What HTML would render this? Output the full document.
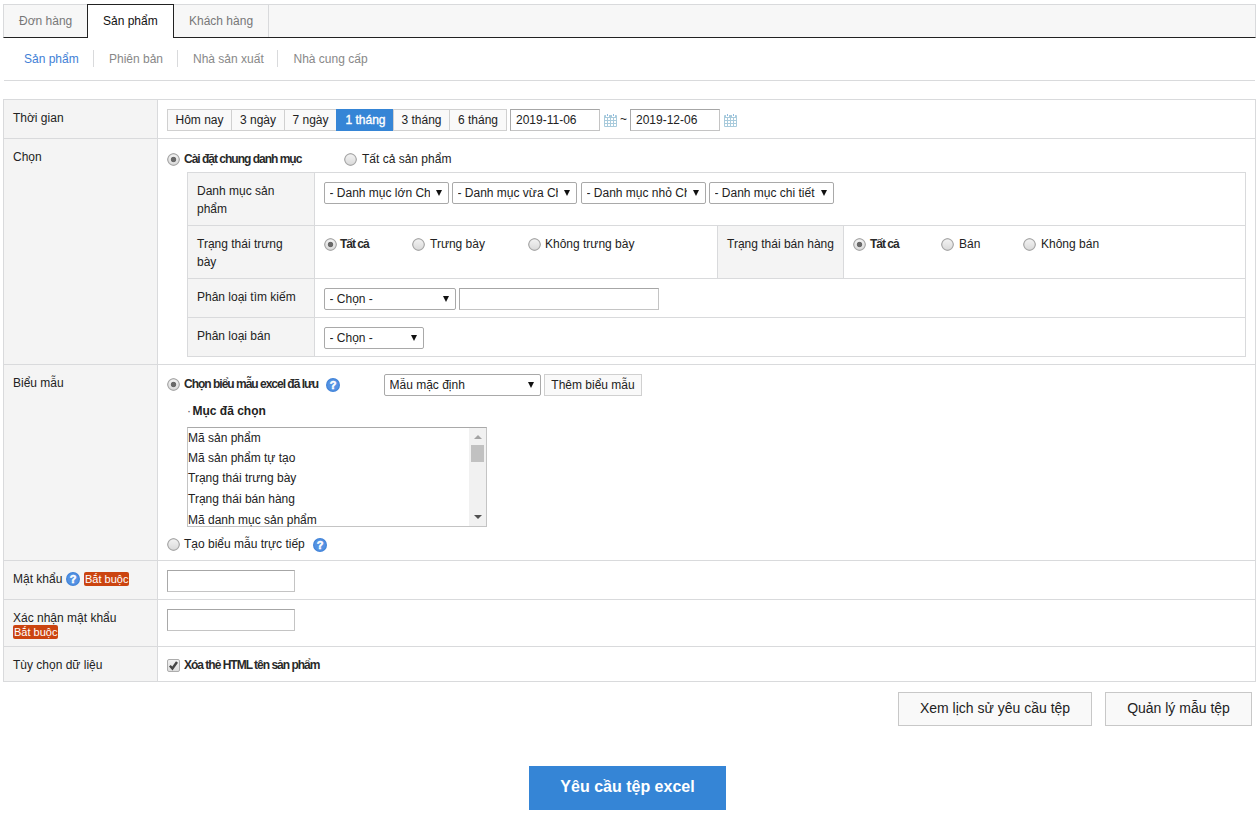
<!DOCTYPE html>
<html lang="vi">
<head>
<meta charset="utf-8">
<title>Xuất excel sản phẩm</title>
<style>
*{box-sizing:border-box;margin:0;padding:0}
html,body{width:1260px;height:819px;background:#fff;overflow:hidden}
body{position:relative;font-family:"Liberation Sans",sans-serif;font-size:12px;color:#222;line-height:14px}
.a{position:absolute}
.t{position:absolute;white-space:nowrap;line-height:14px;height:14px}
.b{font-weight:bold;letter-spacing:-1px;color:#2a2a2a}
.box{position:absolute;border:1px solid #d9dadc}
.bg{position:absolute;background:#f4f4f4}
.hl{position:absolute;height:1px;background:#d9dadc}
.vl{position:absolute;width:1px;background:#d9dadc}
.inp{position:absolute;background:#fff;border:1px solid #c4c4c4;border-top-color:#a6a6a6;border-left-color:#a9a9a9}
.sel{position:absolute;background:#fff;border:1px solid #a9a9a9;border-radius:2px;height:22px;overflow:hidden}
.sel span{position:absolute;left:4.5px;top:3px;white-space:nowrap;line-height:14px;overflow:hidden}
.sel i{position:absolute;right:6px;top:7px;width:0;height:0;border-left:3.5px solid transparent;border-right:3.5px solid transparent;border-top:6px solid #111}
.rad{position:absolute;width:13px;height:13px;border-radius:50%;background:radial-gradient(circle at 50% 50%,rgba(172,172,172,0) 0,rgba(172,172,172,0) 4.7px,#acacac 5.5px,#acacac 6.1px,#fff 6.8px),linear-gradient(#f3f3f3 1px,#dcdcdc 11px)}
.rad.on:after{content:"";position:absolute;left:0;top:0;width:13px;height:13px;border-radius:50%;background:radial-gradient(circle at 50% 50%,#696969 0,#696969 2.3px,rgba(105,105,105,0) 3.1px)}
.help{position:absolute;width:14px;height:14px;border-radius:50%;background:radial-gradient(circle at 50% 50%,#5794e3 0,#5492e2 5px,#3f82d8 6.6px);color:#fff;font-weight:bold;font-size:11px;line-height:14px;text-align:center;-webkit-text-stroke:0.5px #fff}
.badge{position:absolute;height:14px;width:45px;background:#cb4410;color:#fff;font-size:11px;line-height:15px;border-radius:2px;padding:0 0 0 1px;white-space:nowrap;overflow:hidden}
.pbtn{position:absolute;top:109px;height:22px;border:1px solid #d0d0d0;background:#f9f9f9;text-align:center;line-height:20px;white-space:nowrap}
.pbtn.on{background:#3585d6;border-color:#3585d6;color:#fff;padding-left:2px;-webkit-text-stroke:0.35px #fff}
.btn{position:absolute;top:692px;height:34px;border:1px solid #c8c8c8;background:#f9f9f9;font-size:14px;line-height:30px;text-align:center;color:#222}
</style>
</head>
<body>

<!-- main tabs -->
<div class="a" style="left:3px;top:4px;width:1253px;height:34px;background:#f7f7f7;border:1px solid #d9dadc;border-bottom:1px solid #222"></div>
<div class="vl" style="left:268px;top:5px;height:32px"></div>
<div class="a" style="left:87px;top:4px;width:87px;height:34px;background:#fff;border:1px solid #222;border-bottom:none"></div>
<span class="t" style="left:19px;top:14px;color:#777">Đơn hàng</span>
<span class="t" style="left:103px;top:14px;color:#111">Sản phẩm</span>
<span class="t" style="left:189px;top:14px;color:#777">Khách hàng</span>

<!-- sub nav -->
<span class="t" style="left:24px;top:52px;color:#3f7fd6">Sản phẩm</span>
<div class="vl" style="left:93px;top:50px;height:17px"></div>
<span class="t" style="left:109px;top:52px;color:#888">Phiên bản</span>
<div class="vl" style="left:177px;top:50px;height:17px"></div>
<span class="t" style="left:193px;top:52px;color:#888">Nhà sản xuất</span>
<div class="vl" style="left:277px;top:50px;height:17px"></div>
<span class="t" style="left:293.5px;top:52px;color:#888">Nhà cung cấp</span>
<div class="hl" style="left:4px;top:80px;width:1251px"></div>

<!-- form table frame -->
<div class="bg" style="left:3px;top:99px;width:155px;height:583px"></div>
<div class="box" style="left:3px;top:99px;width:1253px;height:583px"></div>
<div class="vl" style="left:157px;top:99px;height:583px"></div>
<div class="hl" style="left:3px;top:138px;width:1253px"></div>
<div class="hl" style="left:3px;top:364px;width:1253px"></div>
<div class="hl" style="left:3px;top:560px;width:1253px"></div>
<div class="hl" style="left:3px;top:599px;width:1253px"></div>
<div class="hl" style="left:3px;top:646px;width:1253px"></div>

<!-- left labels -->
<span class="t" style="left:13px;top:111px">Thời gian</span>
<span class="t" style="left:13px;top:150px">Chọn</span>
<span class="t" style="left:13px;top:376px">Biểu mẫu</span>
<span class="t" style="left:13px;top:572px">Mật khẩu</span>
<span class="help" style="left:66px;top:572px">?</span>
<span class="badge" style="left:84px;top:572px">Bắt buộc</span>
<span class="t" style="left:13px;top:611px">Xác nhận mật khẩu</span>
<span class="badge" style="left:13px;top:625px">Bắt buộc</span>
<span class="t" style="left:13px;top:658px">Tùy chọn dữ liệu</span>

<!-- row 1: period -->
<div class="pbtn" style="left:167px;width:65px">Hôm nay</div>
<div class="pbtn" style="left:231px;width:54px">3 ngày</div>
<div class="pbtn" style="left:284px;width:53px">7 ngày</div>
<div class="pbtn on" style="left:336px;width:57px">1 tháng</div>
<div class="pbtn" style="left:393px;width:57px">3 tháng</div>
<div class="pbtn" style="left:449px;width:58px">6 tháng</div>
<div class="inp" style="left:510px;top:109px;width:90px;height:22px"></div>
<span class="t" style="left:516px;top:113px">2019-11-06</span>
<span class="t" style="left:620px;top:112px">~</span>
<div class="inp" style="left:630px;top:109px;width:90px;height:22px"></div>
<span class="t" style="left:636px;top:113px">2019-12-06</span>

<!-- calendar icons -->
<svg class="a" style="left:604px;top:114px" width="13" height="13" viewBox="0 0 13 13"><g fill="#a9cbdc"><rect x="0" y="1" width="13" height="12" rx="1"/><rect x="3" y="0" width="1" height="2"/><rect x="9" y="0" width="1" height="2"/></g><g fill="#fff"><rect x="2" y="1" width="3" height="2"/><rect x="8" y="1" width="3" height="2"/><rect x="1" y="4" width="2" height="2"/><rect x="4" y="4" width="2" height="2"/><rect x="7" y="4" width="2" height="2"/><rect x="10" y="4" width="2" height="2"/><rect x="1" y="7" width="2" height="2"/><rect x="4" y="7" width="2" height="2"/><rect x="7" y="7" width="2" height="2"/><rect x="10" y="7" width="2" height="2"/><rect x="1" y="10" width="2" height="2"/><rect x="4" y="10" width="2" height="2"/><rect x="7" y="10" width="2" height="2"/><rect x="10" y="10" width="2" height="2"/></g><g fill="#8fbbe0"><rect x="3" y="0" width="1" height="2"/><rect x="9" y="0" width="1" height="2"/></g></svg>
<svg class="a" style="left:724px;top:114px" width="13" height="13" viewBox="0 0 13 13"><g fill="#a9cbdc"><rect x="0" y="1" width="13" height="12" rx="1"/></g><g fill="#fff"><rect x="2" y="1" width="3" height="2"/><rect x="8" y="1" width="3" height="2"/><rect x="1" y="4" width="2" height="2"/><rect x="4" y="4" width="2" height="2"/><rect x="7" y="4" width="2" height="2"/><rect x="10" y="4" width="2" height="2"/><rect x="1" y="7" width="2" height="2"/><rect x="4" y="7" width="2" height="2"/><rect x="7" y="7" width="2" height="2"/><rect x="10" y="7" width="2" height="2"/><rect x="1" y="10" width="2" height="2"/><rect x="4" y="10" width="2" height="2"/><rect x="7" y="10" width="2" height="2"/><rect x="10" y="10" width="2" height="2"/></g><g fill="#8fbbe0"><rect x="3" y="0" width="1" height="2"/><rect x="9" y="0" width="1" height="2"/></g></svg>

<!-- row 2: Chọn -->
<span class="rad on" style="left:167px;top:153px"></span>
<span class="t b" style="left:184px;top:152px">Cài đặt chung danh mục</span>
<span class="rad" style="left:344px;top:153px"></span>
<span class="t" style="left:362px;top:152px">Tất cả sản phẩm</span>

<div class="bg" style="left:187px;top:172px;width:128px;height:185px"></div>
<div class="bg" style="left:717px;top:225px;width:127px;height:54px"></div>
<div class="box" style="left:187px;top:172px;width:1059px;height:185px"></div>
<div class="vl" style="left:314px;top:172px;height:185px"></div>
<div class="hl" style="left:187px;top:225px;width:1059px"></div>
<div class="hl" style="left:187px;top:278px;width:1059px"></div>
<div class="hl" style="left:187px;top:317px;width:1059px"></div>
<div class="vl" style="left:717px;top:225px;height:54px"></div>
<div class="vl" style="left:843px;top:225px;height:54px"></div>

<span class="t" style="left:197px;top:184px">Danh mục sản</span>
<span class="t" style="left:197px;top:202px">phẩm</span>
<span class="t" style="left:197px;top:237px">Trạng thái trưng</span>
<span class="t" style="left:197px;top:255px">bày</span>
<span class="t" style="left:197px;top:290px">Phân loại tìm kiếm</span>
<span class="t" style="left:197px;top:329px">Phân loại bán</span>

<div class="sel" style="left:324px;top:182px;width:125px"><span style="width:100px">- Danh mục lớn Chọn -</span><i></i></div>
<div class="sel" style="left:452px;top:182px;width:125px"><span style="width:100px">- Danh mục vừa Chọn -</span><i></i></div>
<div class="sel" style="left:581px;top:182px;width:125px"><span style="width:100px">- Danh mục nhỏ Chọn -</span><i></i></div>
<div class="sel" style="left:709px;top:182px;width:125px"><span style="width:100px">- Danh mục chi tiết Chọn -</span><i></i></div>

<span class="rad on" style="left:324px;top:238px"></span>
<span class="t b" style="left:340px;top:237px">Tất cả</span>
<span class="rad" style="left:412px;top:238px"></span>
<span class="t" style="left:430px;top:237px">Trưng bày</span>
<span class="rad" style="left:528px;top:238px"></span>
<span class="t" style="left:545px;top:237px">Không trưng bày</span>
<span class="t" style="left:727px;top:237px">Trạng thái bán hàng</span>
<span class="rad on" style="left:853px;top:238px"></span>
<span class="t b" style="left:870px;top:237px">Tất cả</span>
<span class="rad" style="left:941px;top:238px"></span>
<span class="t" style="left:959px;top:237px">Bán</span>
<span class="rad" style="left:1023px;top:238px"></span>
<span class="t" style="left:1041px;top:237px">Không bán</span>

<div class="sel" style="left:324px;top:288px;width:132px"><span>- Chọn -</span><i></i></div>
<div class="inp" style="left:459px;top:288px;width:200px;height:22px"></div>
<div class="sel" style="left:324px;top:327px;width:100px"><span>- Chọn -</span><i></i></div>

<!-- row 3: Biểu mẫu -->
<span class="rad on" style="left:167px;top:378px"></span>
<span class="t b" style="left:184px;top:377px">Chọn biểu mẫu excel đã lưu</span>
<span class="help" style="left:326px;top:378px">?</span>
<div class="sel" style="left:384px;top:374px;width:157px"><span>Mẫu mặc định</span><i></i></div>
<div class="pbtn" style="left:544px;top:374px;width:98px">Thêm biểu mẫu</div>
<span class="t" style="left:187px;top:404px;color:#555">·</span><span class="t" style="left:192.5px;top:404px;font-weight:bold">Mục đã chọn</span>
<div class="a" style="left:187px;top:427px;width:300px;height:100px;border:1px solid #c4c4c4;border-top-color:#a9a9a9;background:#fff"></div>
<span class="t" style="left:188px;top:431px">Mã sản phẩm</span>
<span class="t" style="left:188px;top:451px">Mã sản phẩm tự tạo</span>
<span class="t" style="left:188px;top:471px">Trạng thái trưng bày</span>
<span class="t" style="left:188px;top:492px">Trạng thái bán hàng</span>
<span class="t" style="left:188px;top:513px">Mã danh mục sản phẩm</span>
<!-- scrollbar -->
<div class="a" style="left:469px;top:428px;width:17px;height:98px;background:#f1f1f1"></div>
<div class="a" style="left:471px;top:445px;width:13px;height:17px;background:#c1c1c1"></div>
<div class="a" style="left:473.5px;top:435px;width:0;height:0;border-left:4px solid transparent;border-right:4px solid transparent;border-bottom:4px solid #a3a3a3"></div>
<div class="a" style="left:473.5px;top:515px;width:0;height:0;border-left:4px solid transparent;border-right:4px solid transparent;border-top:4.5px solid #505050"></div>

<span class="rad" style="left:167px;top:538px"></span>
<span class="t" style="left:184px;top:537px">Tạo biểu mẫu trực tiếp</span>
<span class="help" style="left:313px;top:538px">?</span>

<!-- rows 4-6 -->
<div class="inp" style="left:167px;top:570px;width:128px;height:22px"></div>
<div class="inp" style="left:167px;top:609px;width:128px;height:22px"></div>
<span class="a" style="left:167px;top:659px;width:13px;height:13px;border:1px solid #adadad;border-radius:2px;background:linear-gradient(#f0f0f0,#dedede)"></span>
<svg class="a" style="left:167px;top:659px" width="13" height="13" viewBox="0 0 13 13"><path d="M2.9 6.8 L5.4 9.5 L10 3" fill="none" stroke="#444" stroke-width="2.4"/></svg>
<span class="t b" style="left:184px;top:658px">Xóa thẻ HTML tên sản phẩm</span>

<!-- bottom buttons -->
<div class="btn" style="left:898px;width:194px">Xem lịch sử yêu cầu tệp</div>
<div class="btn" style="left:1105px;width:147px">Quản lý mẫu tệp</div>
<div class="a" style="left:529px;top:766px;width:197px;height:44px;background:#3585d6;color:#fff;font-weight:bold;font-size:16px;line-height:42px;text-align:center">Yêu cầu tệp excel</div>

</body>
</html>
